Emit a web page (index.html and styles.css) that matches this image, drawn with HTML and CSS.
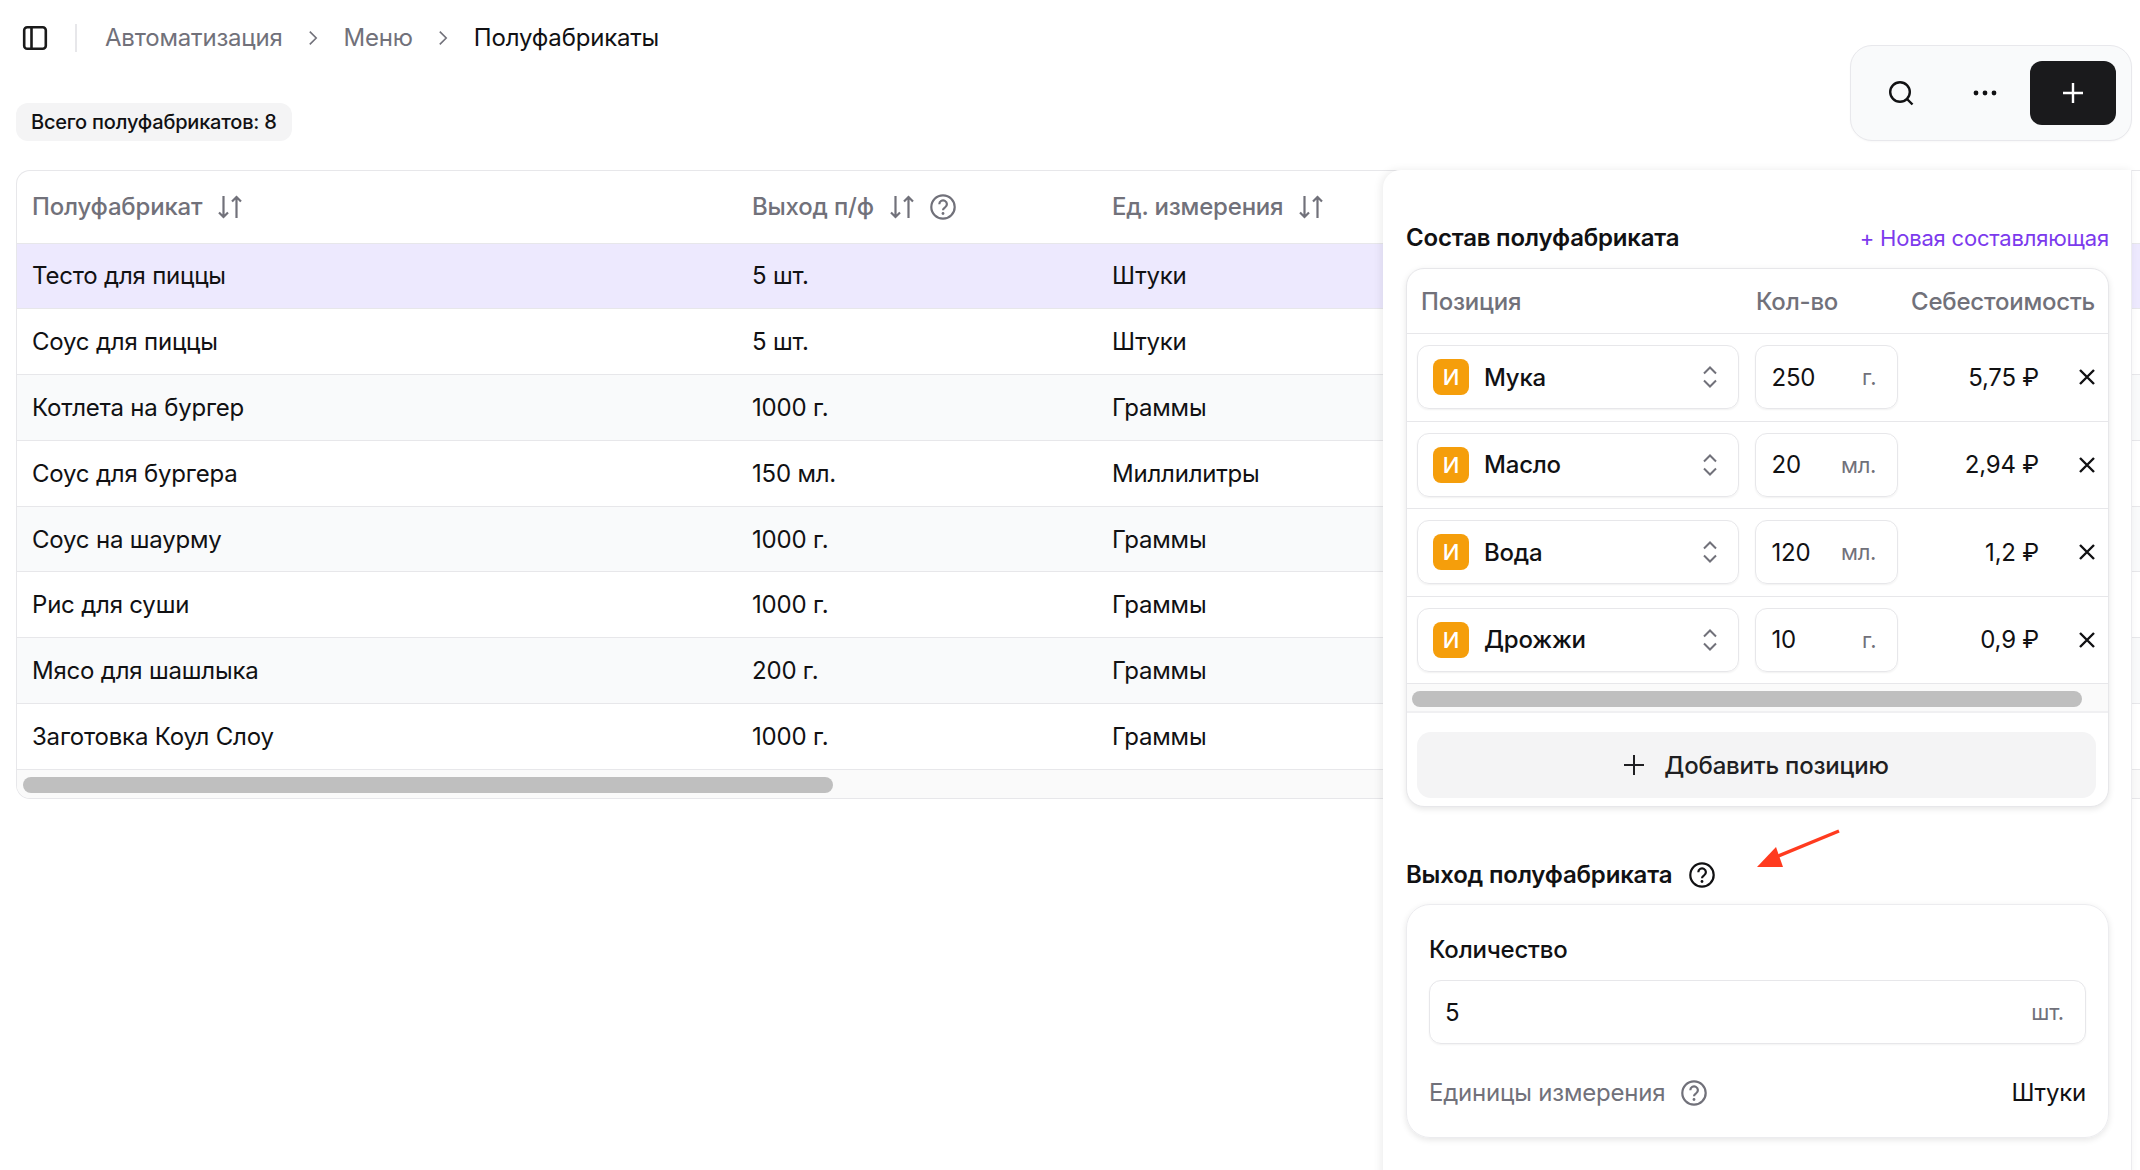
FILE: index.html
```html
<!DOCTYPE html>
<html lang="ru">
<head>
<meta charset="utf-8">
<title>Полуфабрикаты</title>
<link rel="stylesheet" href="styles.css">
</head>
<body>
<svg class="defs" width="0" height="0" aria-hidden="true">
  <symbol id="sort" viewBox="0 0 24 24"><path d="M5.5 1v21M1 17.5l4.5 4.5 4.5-4.5M18.5 23V2M14 6.500l4.500-4.500 4.500 4.500" fill="none" stroke="currentColor" stroke-width="2.200"/></symbol>
  <symbol id="help" viewBox="0 0 26 26"><circle cx="13" cy="13" r="11.700" fill="none" stroke="currentColor" stroke-width="2.200"/><path d="M9.300 10.200a3.800 3.800 0 1 1 5.800 3.200c-1.300.8-2.100 1.500-2.100 2.800" fill="none" stroke="currentColor" stroke-width="2.200"/><circle cx="13" cy="19.500" r="1.400" fill="currentColor"/></symbol>
  <symbol id="updown" viewBox="0 0 16 22"><path d="M2 7.500l6-6 6 6M2 14.500l6 6 6-6" fill="none" stroke="currentColor" stroke-width="2"/></symbol>
  <symbol id="close" viewBox="0 0 18 18"><path d="M2 2l14 14M16 2L2 16" fill="none" stroke="currentColor" stroke-width="2.400"/></symbol>
</svg>

<header class="head">
  <div class="head-left">
    <nav class="crumbs">
      <svg class="side-icon" viewBox="0 0 26 26"><rect x="2.200" y="2.200" width="21.600" height="21.600" rx="3" fill="none" stroke="currentColor" stroke-width="2.600"/><path d="M9.500 2v22" stroke="currentColor" stroke-width="2.600"/></svg>
      <span class="crumb-sep"></span>
      <span class="crumb">Автоматизация</span>
      <svg class="crumb-arrow" viewBox="0 0 12 20"><path d="M2 2l8 8-8 8" fill="none" stroke="currentColor" stroke-width="2"/></svg>
      <span class="crumb">Меню</span>
      <svg class="crumb-arrow" viewBox="0 0 12 20"><path d="M2 2l8 8-8 8" fill="none" stroke="currentColor" stroke-width="2"/></svg>
      <span class="crumb crumb-now">Полуфабрикаты</span>
    </nav>
    <div class="total">Всего полуфабрикатов: 8</div>
  </div>
  <div class="toolbar">
    <button class="tool">
      <svg class="tool-search" viewBox="0 0 26 26"><circle cx="12" cy="12" r="9.800" fill="none" stroke="currentColor" stroke-width="2.400"/><path d="M19 19l5.500 5.500" stroke="currentColor" stroke-width="2.400"/></svg>
    </button>
    <button class="tool">
      <svg class="tool-dots" viewBox="0 0 24 6"><circle cx="3" cy="3" r="2.400" fill="currentColor"/><circle cx="12" cy="3" r="2.400" fill="currentColor"/><circle cx="21" cy="3" r="2.400" fill="currentColor"/></svg>
    </button>
    <button class="tool-add">
      <svg class="tool-plus" viewBox="0 0 20 20"><path d="M10 0v20M0 10h20" stroke="currentColor" stroke-width="2.400"/></svg>
    </button>
  </div>
</header>

<main class="main">
  <section class="table-card">
    <table class="table">
      <colgroup><col class="col-a"><col class="col-b"><col></colgroup>
      <thead>
        <tr>
          <th><span class="th-in">Полуфабрикат<svg class="ic-sort"><use href="#sort"/></svg></span></th>
          <th><span class="th-in">Выход п/ф<svg class="ic-sort"><use href="#sort"/></svg><svg class="ic-help"><use href="#help"/></svg></span></th>
          <th><span class="th-in">Ед. измерения<svg class="ic-sort"><use href="#sort"/></svg></span></th>
        </tr>
      </thead>
      <tbody>
        <tr class="is-selected"><td>Тесто для пиццы</td><td>5 шт.</td><td>Штуки</td></tr>
        <tr><td>Соус для пиццы</td><td>5 шт.</td><td>Штуки</td></tr>
        <tr class="is-alt"><td>Котлета на бургер</td><td>1000 г.</td><td>Граммы</td></tr>
        <tr><td>Соус для бургера</td><td>150 мл.</td><td>Миллилитры</td></tr>
        <tr class="is-alt"><td>Соус на шаурму</td><td>1000 г.</td><td>Граммы</td></tr>
        <tr><td>Рис для суши</td><td>1000 г.</td><td>Граммы</td></tr>
        <tr class="is-alt"><td>Мясо для шашлыка</td><td>200 г.</td><td>Граммы</td></tr>
        <tr><td>Заготовка Коул Слоу</td><td>1000 г.</td><td>Граммы</td></tr>
      </tbody>
    </table>
    <div class="scroll table-scroll"><div class="thumb table-thumb"></div></div>
  </section>

  <aside class="panel">
    <div class="sec-head">
      <h2 class="sec-title">Состав полуфабриката</h2>
      <a class="new-link">+ Новая составляющая</a>
    </div>
    <div class="comp-card">
      <div class="comp-head">
        <span>Позиция</span><span>Кол-во</span><span>Себестоимость</span>
      </div>
      <div class="comp-row">
        <div class="select"><span class="mark">И</span><span class="sel-name">Мука</span><svg class="ic-updown"><use href="#updown"/></svg></div>
        <div class="qty"><span>250</span><span class="unit">г.</span></div>
        <div class="cost">5,75 ₽</div>
        <svg class="ic-close"><use href="#close"/></svg>
      </div>
      <div class="comp-row">
        <div class="select"><span class="mark">И</span><span class="sel-name">Масло</span><svg class="ic-updown"><use href="#updown"/></svg></div>
        <div class="qty"><span>20</span><span class="unit">мл.</span></div>
        <div class="cost">2,94 ₽</div>
        <svg class="ic-close"><use href="#close"/></svg>
      </div>
      <div class="comp-row">
        <div class="select"><span class="mark">И</span><span class="sel-name">Вода</span><svg class="ic-updown"><use href="#updown"/></svg></div>
        <div class="qty"><span>120</span><span class="unit">мл.</span></div>
        <div class="cost">1,2 ₽</div>
        <svg class="ic-close"><use href="#close"/></svg>
      </div>
      <div class="comp-row">
        <div class="select"><span class="mark">И</span><span class="sel-name">Дрожжи</span><svg class="ic-updown"><use href="#updown"/></svg></div>
        <div class="qty"><span>10</span><span class="unit">г.</span></div>
        <div class="cost">0,9 ₽</div>
        <svg class="ic-close"><use href="#close"/></svg>
      </div>
      <div class="scroll comp-scroll"><div class="thumb comp-thumb"></div></div>
      <button class="add-btn">
        <svg class="add-plus" viewBox="0 0 20 20"><path d="M10 0v20M0 10h20" stroke="currentColor" stroke-width="2"/></svg>
        Добавить позицию
      </button>
    </div>

    <div class="yield-head">
      <h2 class="sec-title">Выход полуфабриката</h2>
      <svg class="ic-help ic-help-dark"><use href="#help"/></svg>
      <svg class="red-arrow" viewBox="0 0 84 40"><path d="M82 2L14 30" stroke="#ff3b1f" stroke-width="3.400" fill="none"/><path d="M0 38L19 18l7 20z" fill="#ff3b1f"/></svg>
    </div>
    <div class="yield-card">
      <div class="field-label">Количество</div>
      <div class="field"><span>5</span><span class="unit">шт.</span></div>
      <div class="unit-row">
        <span class="unit-label">Единицы измерения<svg class="ic-help"><use href="#help"/></svg></span>
        <span>Штуки</span>
      </div>
    </div>
  </aside>
</main>
</body>
</html>
```

FILE: styles.css
```css
* { box-sizing: border-box; }
html, body { margin: 0; height: 100%; }
body {
  width: 2140px;
  height: 1170px;
  overflow: hidden;
  background: #fff;
  color: #111113;
  font-family: Inter, "Liberation Sans", sans-serif;
  font-size: 24px;
  letter-spacing: -0.2px;
}
.defs { position: absolute; }
button { font: inherit; letter-spacing: inherit; color: inherit; border: 0; background: none; padding: 0; }

/* header */
.head { display: flex; justify-content: space-between; height: 170px; padding: 0 8px 0 16px; }
.head-left { display: flex; flex-direction: column; align-items: flex-start; }
.crumbs { display: flex; align-items: center; height: 76px; padding-left: 6px; color: #71717a; }
.side-icon { width: 26px; height: 26px; color: #1a1a1a; }
.crumb-sep { width: 2px; height: 28px; margin: 0 28px 0 27px; background: #e7e7ea; }
.crumb { line-height: 32px; }
.crumb-now { color: #111113; }
.crumb-arrow { width: 10px; height: 16px; margin: 0 26px 0 25px; }
.total {
  margin-top: 27px;
  height: 38px;
  padding: 0 15px;
  border-radius: 12px;
  background: #f4f4f5;
  font-size: 20px;
  font-weight: 500;
  line-height: 38px;
}
.toolbar {
  display: flex;
  align-items: center;
  align-self: flex-start;
  width: 282px;
  height: 96px;
  margin-top: 45px;
  padding: 0 15px 0 21px;
  border: 1px solid #e8e8ec;
  border-radius: 22px;
  background: #f9fafb;
  box-shadow: 0 1px 2px rgba(0,0,0,.03);
}
.tool { display: flex; align-items: center; justify-content: center; width: 58px; height: 64px; color: #111113; }
.tool + .tool { margin-left: 26px; }
.tool-search { width: 26px; height: 26px; }
.tool-dots { width: 24px; height: 6px; }
.tool-add {
  display: flex; align-items: center; justify-content: center;
  width: 86px; height: 64px; margin-left: auto;
  border-radius: 12px; background: #1a1a1c; color: #fff;
}
.tool-plus { width: 20px; height: 20px; }

/* main */
.main { position: relative; padding-left: 16px; }
.table-card {
  width: 2140px;
  border: 1px solid #e7e7ea;
  border-right: 0;
  border-radius: 14px 0 0 14px;
  overflow: hidden;
}
.table { width: 100%; border-collapse: collapse; table-layout: fixed; }
.col-a { width: 720px; }
.col-b { width: 360px; }
.table th {
  height: 72px;
  padding: 0 0 0 15px;
  border-bottom: 1px solid #e7e7ea;
  color: #71717a;
  font-weight: 500;
  text-align: left;
}
.th-in { display: flex; align-items: center; }
.ic-sort { width: 24px; height: 24px; margin-left: 16px; flex: none; color: #71717a; }
.ic-help { width: 26px; height: 26px; margin-left: 16px; flex: none; color: #71717a; }
.ic-help-dark { color: #111113; margin-left: 17px; }
.table td { height: 65.800px; padding: 0 0 0 15px; border-bottom: 1px solid #e7e7ea; }
.is-selected td { background: #ede9fe; }
.is-alt td { background: #f9fafb; }
.scroll { background: #fafafa; }
.table-scroll { height: 28px; padding: 7px 6px; }
.thumb { height: 16px; border-radius: 8px; background: #bfbfbf; }
.table-thumb { width: 810px; }

/* panel */
.panel {
  position: absolute;
  top: 0;
  right: 8px;
  width: 749px;
  height: 1010px;
  padding: 0 22px 0 23px;
  border-radius: 18px 0 0 0;
  background: #fff;
  border-right: 1px solid #ececef;
  box-shadow: -2px 0 8px rgba(0,0,0,.08);
}
.sec-head { display: flex; justify-content: space-between; align-items: center; height: 98px; padding-top: 38px; }
.sec-title { margin: 0; font-size: 24px; font-weight: 600; line-height: 32px; }
.new-link { color: #7c3aed; font-size: 22px; }
.comp-card {
  height: 539px;
  border: 1px solid #e7e7ea;
  border-radius: 18px;
  background: #fff;
  box-shadow: 0 2px 6px rgba(0,0,0,.1);
}
.comp-head {
  display: grid;
  grid-template-columns: 335px 155px 1fr;
  align-items: center;
  height: 65px;
  padding-left: 14px;
  border-bottom: 1px solid #e7e7ea;
  color: #71717a;
  font-weight: 500;
}
.comp-row {
  display: flex;
  align-items: center;
  height: 87.500px;
  padding: 0 12px 0 10px;
  border-bottom: 1px solid #e7e7ea;
}
.select {
  display: flex; align-items: center;
  width: 323px; height: 64px;
  padding: 0 20px 0 15px;
  border: 1px solid #e7e7ea; border-radius: 12px;
  box-shadow: 0 1px 2px rgba(0,0,0,.06);
}
.mark {
  width: 36px; height: 36px; flex: none;
  border-radius: 8px;
  background: #f59e0b;
  color: #fff;
  font-size: 22px;
  font-weight: 500;
  line-height: 36px;
  text-align: center;
}
.sel-name { margin-left: 15px; font-weight: 500; }
.ic-updown { width: 16px; height: 22px; margin-left: auto; color: #71717a; }
.qty {
  display: flex; align-items: center; justify-content: space-between;
  width: 143px; height: 64px; margin-left: 16px;
  padding: 0 21px 0 15px;
  border: 1px solid #e7e7ea; border-radius: 12px;
  box-shadow: 0 1px 2px rgba(0,0,0,.06);
}
.unit { color: #71717a; font-size: 22px; }
.cost { width: 141px; text-align: right; }
.ic-close { width: 18px; height: 18px; margin-left: 39px; flex: none; color: #111113; }
.comp-scroll { height: 29px; padding: 7px 5px; border-bottom: 2px solid #f0f0f2; }
.comp-thumb { width: 670px; }
.add-btn {
  display: flex; align-items: center; justify-content: center;
  width: 679px; height: 66px; margin: 19px 0 0 10px;
  border-radius: 14px;
  background: #f4f4f5;
  color: #1f1f22;
  font-weight: 500;
}
.add-plus { width: 20px; height: 20px; margin-right: 20px; }

.yield-head { position: relative; display: flex; align-items: center; height: 32px; margin-top: 52px; }
.red-arrow { position: absolute; left: 351px; top: -30px; width: 84px; height: 40px; }
.yield-card {
  height: 234px;
  margin-top: 13px;
  padding: 0 22px;
  border: 1px solid #ececef;
  border-radius: 24px;
  box-shadow: 0 2px 6px rgba(0,0,0,.1);
}
.field-label { margin-top: 29px; font-weight: 500; line-height: 32px; }
.field {
  display: flex; align-items: center; justify-content: space-between;
  height: 64px; margin-top: 14px;
  padding: 0 21px 0 15px;
  border: 1px solid #e7e7ea; border-radius: 12px;
  box-shadow: 0 1px 2px rgba(0,0,0,.05);
}
.unit-row { display: flex; justify-content: space-between; align-items: center; margin-top: 33px; line-height: 32px; }
.unit-label { display: flex; align-items: center; color: #71717a; }
```
